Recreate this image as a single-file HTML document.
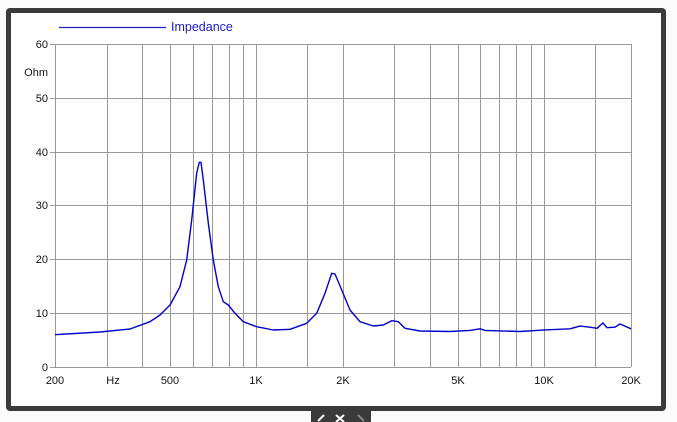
<!DOCTYPE html>
<html><head><style>
html,body{margin:0;padding:0;background:#fafafa;width:677px;height:422px;overflow:hidden;font-family:"Liberation Sans",sans-serif}
.frame{position:absolute;left:6px;top:8px;width:650px;height:393px;border:5px solid #3a3a3a;border-radius:4px;background:#fff}
.tab{position:absolute;left:311px;top:411px;width:60px;height:11px;background:#3a3a3a}
svg{position:absolute;left:0;top:0}
</style></head><body>
<div class="frame"></div>
<div class="tab"></div>
<svg width="677" height="422" font-family="Liberation Sans, sans-serif">
<g stroke="#999" stroke-width="1">
<line x1="55" y1="44.5" x2="631" y2="44.5"/><line x1="55" y1="98.5" x2="631" y2="98.5"/><line x1="55" y1="152.5" x2="631" y2="152.5"/><line x1="55" y1="205.5" x2="631" y2="205.5"/><line x1="55" y1="259.5" x2="631" y2="259.5"/><line x1="55" y1="313.5" x2="631" y2="313.5"/>
<line x1="55.5" y1="44" x2="55.5" y2="367"/><line x1="107.5" y1="44" x2="107.5" y2="367"/><line x1="142.5" y1="44" x2="142.5" y2="367"/><line x1="170.5" y1="44" x2="170.5" y2="367"/><line x1="193.5" y1="44" x2="193.5" y2="367"/><line x1="212.5" y1="44" x2="212.5" y2="367"/><line x1="229.5" y1="44" x2="229.5" y2="367"/><line x1="243.5" y1="44" x2="243.5" y2="367"/><line x1="256.5" y1="44" x2="256.5" y2="367"/><line x1="307.5" y1="44" x2="307.5" y2="367"/><line x1="343.5" y1="44" x2="343.5" y2="367"/><line x1="394.5" y1="44" x2="394.5" y2="367"/><line x1="430.5" y1="44" x2="430.5" y2="367"/><line x1="458.5" y1="44" x2="458.5" y2="367"/><line x1="480.5" y1="44" x2="480.5" y2="367"/><line x1="499.5" y1="44" x2="499.5" y2="367"/><line x1="516.5" y1="44" x2="516.5" y2="367"/><line x1="531.5" y1="44" x2="531.5" y2="367"/><line x1="544.5" y1="44" x2="544.5" y2="367"/><line x1="595.5" y1="44" x2="595.5" y2="367"/><line x1="631.5" y1="44" x2="631.5" y2="367"/>
<line x1="50" y1="367.5" x2="631" y2="367.5"/>
<line x1="50" y1="44.5" x2="55" y2="44.5"/><line x1="50" y1="98.5" x2="55" y2="98.5"/><line x1="50" y1="152.5" x2="55" y2="152.5"/><line x1="50" y1="205.5" x2="55" y2="205.5"/><line x1="50" y1="259.5" x2="55" y2="259.5"/><line x1="50" y1="313.5" x2="55" y2="313.5"/>
</g>
<g font-size="11" fill="#111" text-anchor="end">
<text x="48" y="48">60</text><text x="48" y="102">50</text><text x="48" y="156">40</text><text x="48" y="209">30</text><text x="48" y="263">20</text><text x="48" y="317">10</text><text x="48" y="371">0</text>
<text x="48" y="76">Ohm</text>
</g>
<g font-size="11" fill="#111" text-anchor="middle">
<text x="55" y="384">200</text><text x="113" y="384">Hz</text><text x="170" y="384">500</text><text x="256" y="384">1K</text><text x="343" y="384">2K</text><text x="458" y="384">5K</text><text x="544" y="384">10K</text><text x="631" y="384">20K</text>
</g>
<line x1="59" y1="27.5" x2="166" y2="27.5" stroke="#2020c0" stroke-width="1.3"/>
<text x="171" y="31" font-size="12.5" fill="#1a1acc">Impedance</text>
<polyline fill="none" stroke="#0000cc" stroke-width="1.4" stroke-linejoin="round" points="55,334.7 100,332 130,329 150,321.7 160,315 170,305 180,286.7 186.7,260 191.7,220 196.7,173 199.3,162.3 201,162.3 203.3,180 208.3,223 213.3,260 218.3,286.7 223.3,301.7 228.3,305 235,313.3 243.3,321.7 256.7,326.7 273.3,330 290,329.3 306.7,323.3 316.7,313.3 325,293.3 331.7,273.3 335,274 341.7,290 350,310 360,321.7 373.3,326 383.3,325 391.7,320.7 398.3,321.7 405,328.3 420,331 450,331.5 470,330.4 480,328.8 485,330.4 520,331.5 545,329.9 570,328.8 580,326.1 590,327.2 597,328.3 603,322.9 607,327.7 615,327.2 620,324 625,326.1 631,328.8"/>
<g stroke="#fff" stroke-width="2" fill="none">
<path d="M318 421 L324 415"/><path d="M336 415 L344 422 M344 415 L336 422"/><path d="M358 415 L364 421" stroke="#888"/>
</g>
</svg>
</body></html>
